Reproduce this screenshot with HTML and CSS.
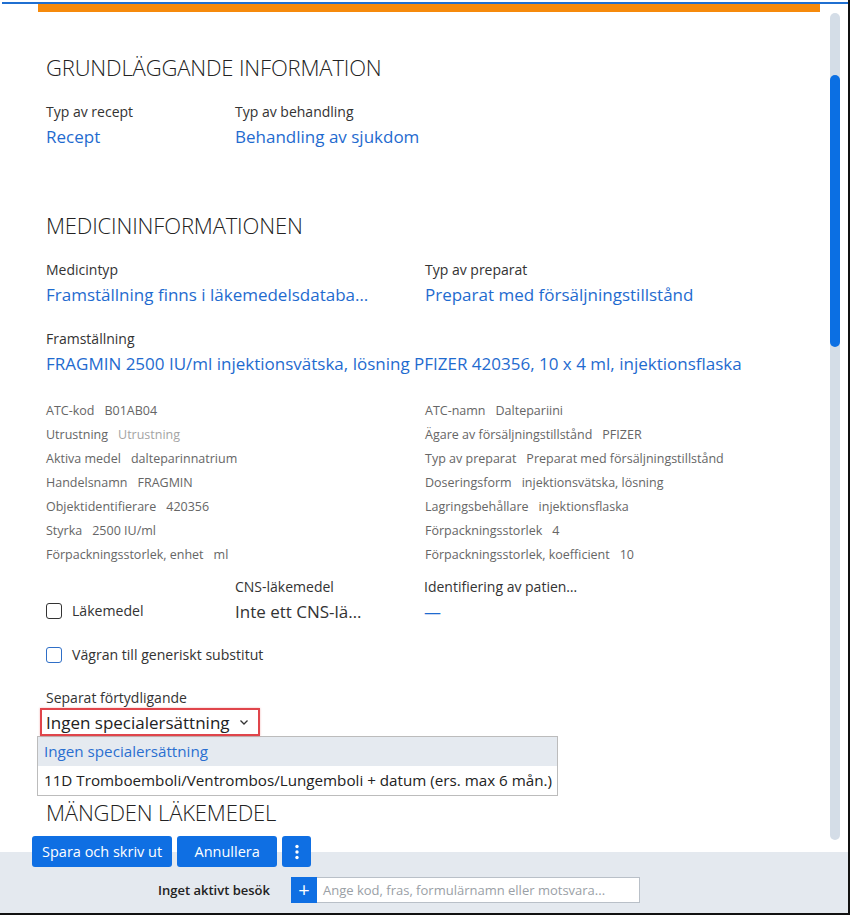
FILE: index.html
```html
<!DOCTYPE html>
<html lang="sv">
<head>
  <meta charset="UTF-8">
  <title>Recept</title>
  <link rel="stylesheet" href="styles.css">
</head>
<body>
  <div class="window">
    <div class="topline"></div>
    <div class="content">
      <div class="orange-bar"></div>

      <section class="section first">
        <h2>Grundläggande information</h2>
        <div class="fields">
          <div class="field w190">
            <div class="label">Typ av recept</div>
            <div class="value">Recept</div>
          </div>
          <div class="field">
            <div class="label">Typ av behandling</div>
            <div class="value">Behandling av sjukdom</div>
          </div>
        </div>
      </section>

      <section class="section">
        <h2>Medicininformationen</h2>
        <div class="fields">
          <div class="field w380">
            <div class="label">Medicintyp</div>
            <div class="value ellipsis">Framställning finns i läkemedelsdatabasen</div>
          </div>
          <div class="field">
            <div class="label">Typ av preparat</div>
            <div class="value">Preparat med försäljningstillstånd</div>
          </div>
        </div>
        <div class="fields">
          <div class="field">
            <div class="label">Framställning</div>
            <div class="value">FRAGMIN 2500 IU/ml injektionsvätska, lösning PFIZER 420356, 10 x 4 ml, injektionsflaska</div>
          </div>
        </div>

        <div class="details">
          <div class="detail-col">
            <div class="detail"><span>ATC-kod</span><span>B01AB04</span></div>
            <div class="detail"><span>Utrustning</span><span class="empty">Utrustning</span></div>
            <div class="detail"><span>Aktiva medel</span><span>dalteparinnatrium</span></div>
            <div class="detail"><span>Handelsnamn</span><span>FRAGMIN</span></div>
            <div class="detail"><span>Objektidentifierare</span><span>420356</span></div>
            <div class="detail"><span>Styrka</span><span>2500 IU/ml</span></div>
            <div class="detail"><span>Förpackningsstorlek, enhet</span><span>ml</span></div>
          </div>
          <div class="detail-col">
            <div class="detail"><span>ATC-namn</span><span>Daltepariini</span></div>
            <div class="detail"><span>Ägare av försäljningstillstånd</span><span>PFIZER</span></div>
            <div class="detail"><span>Typ av preparat</span><span>Preparat med försäljningstillstånd</span></div>
            <div class="detail"><span>Doseringsform</span><span>injektionsvätska, lösning</span></div>
            <div class="detail"><span>Lagringsbehållare</span><span>injektionsflaska</span></div>
            <div class="detail"><span>Förpackningsstorlek</span><span>4</span></div>
            <div class="detail"><span>Förpackningsstorlek, koefficient</span><span>10</span></div>
          </div>
        </div>

        <div class="fields check-row">
          <label class="check w190"><span class="box"></span>Läkemedel</label>
          <div class="field w190">
            <div class="label">CNS-läkemedel</div>
            <div class="value dark ellipsis cns">Inte ett CNS-läkemedel</div>
          </div>
          <div class="field">
            <div class="label ellipsis ident">Identifiering av patienten</div>
            <div class="value">—</div>
          </div>
        </div>

        <label class="check single"><span class="box blue"></span>Vägran till generiskt substitut</label>

        <div class="select-field">
          <div class="label">Separat förtydligande</div>
          <div class="select">
            Ingen specialersättning
            <svg width="12" height="12" viewBox="0 0 12 12"><path d="M2.5 4.5 L6 8 L9.5 4.5" fill="none" stroke="#333" stroke-width="1.3"/></svg>
          </div>
          <ul class="options">
            <li class="active">Ingen specialersättning</li>
            <li>11D Tromboemboli/Ventrombos/Lungemboli + datum (ers. max 6 mån.)</li>
          </ul>
        </div>
      </section>

      <section class="section last">
        <h2>Mängden läkemedel</h2>
      </section>

      <div class="scrollbar"><div class="thumb"></div></div>
    </div>

    <div class="footer">
      <div class="actions">
        <button class="btn">Spara och skriv ut</button>
        <button class="btn cancel">Annullera</button>
        <button class="btn more">
          <svg width="4" height="16" viewBox="0 0 4 16"><circle cx="2" cy="2.5" r="1.7" fill="#fff"/><circle cx="2" cy="8" r="1.7" fill="#fff"/><circle cx="2" cy="13.5" r="1.7" fill="#fff"/></svg>
        </button>
      </div>
      <div class="visit">
        <span class="visit-label">Inget aktivt besök</span>
        <div class="search">
          <span class="plus">+</span>
          <span class="placeholder">Ange kod, fras, formulärnamn eller motsvara...</span>
        </div>
      </div>
    </div>
  </div>
</body>
</html>
```

FILE: styles.css
```css
* {
  box-sizing: border-box;
}
body {
  margin: 0;
  background: #fff;
  font-family: "Open Sans", "Noto Sans", sans-serif;
  color: #333;
}
.window {
  width: 850px;
  height: 915px;
  display: flex;
  flex-direction: column;
  border-right: 2px solid #111;
  border-bottom: 2px solid #111;
  overflow: hidden;
}
.topline {
  height: 2px;
  margin: 2px 0 0 2px;
  background: #1f6fd1;
}
.content {
  flex: 1;
  position: relative;
  overflow: hidden;
  padding-left: 46px;
}
.orange-bar {
  height: 8px;
  margin: 0 28px 0 -8px;
  background: #f68a0c;
}

/* section headings */
.section h2 {
  margin: 0;
  font-size: 22px;
  font-weight: 300;
  text-transform: uppercase;
  letter-spacing: -0.15px;
  color: #222;
  line-height: 28px;
}
.section.first {
  padding-top: 41px;
}
.section + .section {
  margin-top: 62px;
}
.section.last {
  margin-top: 2px;
}

/* label / value pairs */
.fields {
  display: flex;
  margin-top: 19px;
}
.first .fields {
  margin-top: 19px;
}
.fields + .fields {
  margin-top: 20px;
}
.field {
  min-width: 0;
}
.w190 {
  width: 189px;
  flex: none;
}
.w380 {
  width: 379px;
  flex: none;
}
.label {
  margin-top: 2px;
  font-size: 14px;
  line-height: 20px;
  color: #333;
}
.value {
  margin-top: 3px;
  font-size: 17px;
  line-height: 24px;
  color: #1f6bcf;
  white-space: nowrap;
}
.value.dark {
  color: #333;
}
.ellipsis {
  overflow: hidden;
  text-overflow: ellipsis;
  white-space: nowrap;
}
.w380 .ellipsis {
  width: 327px;
}
.cns {
  width: 131px;
}
.ident {
  width: 157px;
}

/* read-only attribute list */
.details {
  display: flex;
  margin-top: 23px;
}
.detail-col {
  width: 379px;
}
.detail {
  display: flex;
  gap: 10px;
  font-size: 12.5px;
  line-height: 24px;
  color: #666;
}
.detail .empty {
  color: #a4a4a4;
}

/* checkboxes */
.check-row {
  margin-top: 8px;
  align-items: flex-start;
}
.check {
  display: flex;
  align-items: center;
  gap: 10px;
  font-size: 14.1px;
  color: #333;
}
.check-row .check {
  margin-top: 26px;
}
.box {
  width: 16px;
  height: 16px;
  border: 1.5px solid #333;
  border-radius: 3px;
  background: #fff;
}
.box.blue {
  border-color: #2f6fc7;
}
.single {
  margin-top: 21px;
}

/* open dropdown */
.select-field {
  margin-top: 24px;
}
.select {
  display: inline-flex;
  align-items: center;
  gap: 8px;
  margin: 0 0 0 -6px;
  padding: 0 8px 0 4px;
  height: 28px;
  font-size: 17px;
  color: #222;
  border: 2px solid #e0454b;
  box-shadow: 0 0 2px rgba(224, 69, 75, 0.4);
}
.options {
  list-style: none;
  margin: 0 0 0 -9px;
  padding: 0;
  width: 521px;
  border: 1px solid #bcbcbc;
  background: #fff;
}
.options li {
  height: 29px;
  line-height: 29px;
  padding-left: 6px;
  font-size: 15.2px;
  color: #222;
}
.options li.active {
  background: #e5eaf0;
  color: #2a6fd0;
}

/* scrollbar */
.scrollbar {
  position: absolute;
  top: 9px;
  right: 8px;
  bottom: 12px;
  width: 10px;
  border-radius: 5px;
  background: #d4dde7;
}
.thumb {
  margin-top: 62px;
  height: 272px;
  border-radius: 5px;
  background: #0b6fe3;
}

/* bottom bar */
.footer {
  flex: none;
  height: 61px;
  background: #e4e9ef;
}
.actions {
  display: flex;
  gap: 5px;
  margin: -16px 0 0 32px;
  position: relative;
}
.btn {
  height: 31px;
  padding: 0 10px;
  border: none;
  border-radius: 3px;
  background: #0f6fe3;
  color: #fff;
  font-family: inherit;
  font-size: 14.5px;
}
.btn.cancel {
  min-width: 100px;
}
.btn.more {
  width: 29px;
  padding: 0;
  display: flex;
  align-items: center;
  justify-content: center;
}
.visit {
  display: flex;
  align-items: center;
  margin-top: 10px;
}
.visit-label {
  width: 270px;
  text-align: right;
  font-size: 13px;
  font-weight: 600;
  color: #222;
}
.search {
  display: flex;
  align-items: center;
  margin-left: 21px;
  width: 349px;
  height: 26px;
  background: #fff;
  border: 1px solid #b9c0c8;
}
.plus {
  width: 26px;
  height: 26px;
  margin: -1px 0 0 -1px;
  background: #0f6fe3;
  color: #fff;
  font-size: 20px;
  line-height: 25px;
  text-align: center;
}
.placeholder {
  margin-left: 6px;
  font-size: 13px;
  color: #9aa0a6;
  white-space: nowrap;
}
```
